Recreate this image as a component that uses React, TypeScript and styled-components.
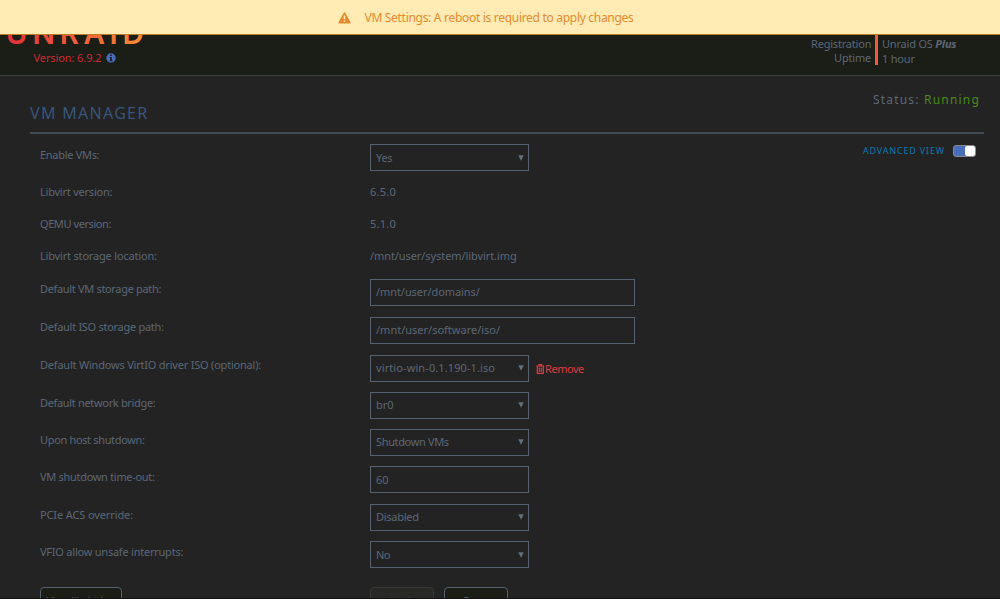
import React from "react";
import styled, { createGlobalStyle } from "styled-components";

const Global = createGlobalStyle`
  * { box-sizing: border-box; }
  html, body { margin: 0; height: 599px; overflow: hidden; background: #232323; }
  body { font: 11px/16px "Noto Sans", sans-serif; color: #5b6776; }
`;

const Page = styled.div`
  height: 599px;
  overflow: hidden;
  display: flex;
  flex-direction: column;
  border-bottom: 1px solid #180f12;
`;

const Banner = styled.div`
  flex: none;
  height: 35px;
  display: flex;
  justify-content: center;
  align-items: center;
  gap: 14px;
  padding: 1px 29px 0 0;
  background: #ffebb3;
  border-bottom: 1px solid #c07a22;
  color: #e68a2e;
`;

const BannerText = styled.span`
  font-size: 12px;
  letter-spacing: -0.3px;
`;

const Header = styled.header`
  flex: none;
  height: 41px;
  display: flex;
  justify-content: space-between;
  background: #1b1d17;
  border-bottom: 1px solid #41443c;
  overflow: hidden;
`;

const Brand = styled.div`
  padding-left: 6px;
`;

const Version = styled.div`
  display: flex;
  align-items: center;
  gap: 5px;
  margin-top: 1px;
  padding-left: 27.5px;
  letter-spacing: -0.1px;
  color: #cb2c34;
`;

const ServerInfo = styled.div`
  display: flex;
  width: 189px;
  height: 30px;
  line-height: 14.5px;
  letter-spacing: -0.2px;
`;

const InfoKeys = styled.div`
  width: 60px;
  padding-top: 1.5px;
  text-align: right;
`;

const InfoValues = styled.div`
  margin-left: 4px;
  padding: 2px 0 0 4px;
  border-left: 3px solid #f15a3a;
  white-space: nowrap;
`;

const Main = styled.main`
  flex: 1;
  min-height: 0;
  padding: 0 16px 0 30px;
`;

const TitleBar = styled.div`
  display: flex;
  justify-content: space-between;
  height: 58px;
  border-bottom: 2px solid #434a54;
`;

const Title = styled.h1`
  margin: 25px 0 0;
  font-size: 16px;
  line-height: 24px;
  font-weight: 400;
  letter-spacing: 1.3px;
  color: #38557a;
`;

const Status = styled.div`
  margin: 15px 4px 0 0;
  font-size: 12px;
  line-height: 18px;
  letter-spacing: 1.2px;
`;

const Running = styled.span`
  color: #4a8a1c;
`;

const Body = styled.div`
  display: flex;
  justify-content: space-between;
`;

const Form = styled.div`
  display: flex;
  flex-direction: column;
  padding: 10px 0 0 10px;
`;

const Row = styled.div<{ $h: number }>`
  display: flex;
  flex: none;
  height: ${(p) => p.$h}px;
`;

const Label = styled.div<{ $ls?: number }>`
  width: 330px;
  padding-top: 2.9px;
  letter-spacing: ${(p) => p.$ls ?? 0}px;
`;

const Value = styled.div<{ $ls?: number }>`
  padding-top: 3px;
  letter-spacing: ${(p) => p.$ls ?? 0}px;
`;

const Field = styled.div<{ $wide?: boolean; $ls?: number }>`
  display: flex;
  align-items: center;
  justify-content: space-between;
  width: ${(p) => (p.$wide ? 265 : 159)}px;
  height: 27px;
  padding: 0 4px 0 5px;
  border: 1px solid #56616f;
  letter-spacing: ${(p) => p.$ls ?? 0}px;
`;

const Remove = styled.div`
  display: flex;
  align-items: center;
  height: 16px;
  margin: 6.8px 0 0 7px;
  letter-spacing: -0.45px;
  color: #dc3c44;
`;

const Advanced = styled.div`
  display: flex;
  align-items: center;
  height: 14px;
  gap: 8px;
  margin: 10px 8px 0 0;
  font-size: 9px;
  letter-spacing: 0.83px;
  color: #0879b2;
`;

const Toggle = styled.div`
  width: 23px;
  height: 12px;
  padding-left: 11px;
  border: 1px solid #8c8c8c;
  border-radius: 3px;
  background: #486dba;
`;

const Knob = styled.div`
  height: 10px;
  border-radius: 2px;
  background: #fff;
`;

const Button = styled.div<{ $w: number; $gap?: number; $off?: boolean }>`
  width: ${(p) => p.$w}px;
  height: 28px;
  margin-right: ${(p) => p.$gap ?? 0}px;
  padding-top: 5px;
  border: 1px solid ${(p) => (p.$off ? "#383838" : "#56616f")};
  border-radius: 4px;
  background: ${(p) => (p.$off ? "#282826" : "#1b1d17")};
  color: ${(p) => (p.$off ? "#3a3d40" : "#586474")};
  text-align: center;
  font-size: 10px;
`;

const Arrow = () => (
  <svg width="6" height="6" viewBox="0 0 6 6">
    <path d="M0.3 0.3H5.7L3 5.8Z" fill="#66717f" />
  </svg>
);

const Logo = () => (
  <svg width="146" height="14" viewBox="6 35 146 14" display="block">
    <defs>
      <linearGradient id="brand" gradientUnits="userSpaceOnUse" x1="8" y1="0" x2="144" y2="0">
        <stop offset="0" stopColor="#e32f3a" />
        <stop offset="1" stopColor="#fb8c36" />
      </linearGradient>
    </defs>
    <text x="5.8 32.6 59.8 83.6 109.6 122.4" y="43.5" fill="url(#brand)" fontFamily="Inter, sans-serif" fontWeight="600" fontSize="29.5">
      UNRAID
    </text>
  </svg>
);

type Item = { label: string; value: string; kind: "select" | "text" | "plain"; h: number; wide?: boolean; ls?: number; vls?: number };

const items: Item[] = [
  { label: "Enable VMs:", value: "Yes", kind: "select", h: 37, ls: -0.3, vls: -0.3 },
  { label: "Libvirt version:", value: "6.5.0", kind: "plain", h: 32, ls: -0.22, vls: 0.25 },
  { label: "QEMU version:", value: "5.1.0", kind: "plain", h: 32, ls: -0.42, vls: 0.25 },
  { label: "Libvirt storage location:", value: "/mnt/user/system/libvirt.img", kind: "plain", h: 33.5, ls: -0.18, vls: -0.08 },
  { label: "Default VM storage path:", value: "/mnt/user/domains/", kind: "text", h: 38, wide: true, ls: -0.33, vls: -0.07 },
  { label: "Default ISO storage path:", value: "/mnt/user/software/iso/", kind: "text", h: 38, wide: true, ls: -0.28 },
  { label: "Default Windows VirtIO driver ISO (optional):", value: "virtio-win-0.1.190-1.iso", kind: "select", h: 37.3, ls: -0.21, vls: 0.1 },
  { label: "Default network bridge:", value: "br0", kind: "select", h: 37.2, ls: -0.33 },
  { label: "Upon host shutdown:", value: "Shutdown VMs", kind: "select", h: 37.2, ls: -0.34, vls: -0.35 },
  { label: "VM shutdown time-out:", value: "60", kind: "text", h: 37.8, ls: -0.3 },
  { label: "PCIe ACS override:", value: "Disabled", kind: "select", h: 37.5, ls: -0.12, vls: -0.28 },
  { label: "VFIO allow unsafe interrupts:", value: "No", kind: "select", h: 45.5, ls: -0.23, vls: -0.5 },
];

export default function App() {
  return (
    <>
      <Global />
      <Page>
        <Banner>
          <svg width="13" height="12" viewBox="0 0 13 12">
            <path d="M6.5 0.3Q7.1 0.3 7.4 0.9L12.5 10.2Q12.9 11.5 11.8 11.5H1.2Q0.1 11.5 0.5 10.2L5.6 0.9Q5.9 0.3 6.5 0.3Z" fill="#e5892d" />
            <path d="M6.5 3.6V7.3M6.5 8.4V10" stroke="#ffebb3" strokeWidth="1.6" />
          </svg>
          <BannerText>VM Settings: A reboot is required to apply changes</BannerText>
        </Banner>
        <Header>
          <Brand>
            <Logo />
            <Version>
              Version: 6.9.2
              <svg width="10" height="10" viewBox="0 0 10 10">
                <circle cx="5" cy="5" r="4.7" fill="#486dba" />
                <path d="M4.2 1.6H5.8V3H4.2ZM3.6 4H5.8V7.2H6.4V8.2H3.6V7.2H4.2V5H3.6Z" fill="#1b1d17" />
              </svg>
            </Version>
          </Brand>
          <ServerInfo>
            <InfoKeys>Registration<br />Uptime</InfoKeys>
            <InfoValues>Unraid OS <b><i>Plus</i></b><br />1 hour</InfoValues>
          </ServerInfo>
        </Header>
        <Main>
          <TitleBar>
            <Title>VM MANAGER</Title>
            <Status>Status: <Running>Running</Running></Status>
          </TitleBar>
          <Body>
            <Form>
              {items.map((it) => (
                <Row key={it.label} $h={it.h}>
                  <Label $ls={it.ls}>{it.label}</Label>
                  {it.kind === "plain" ? (
                    <Value $ls={it.vls}>{it.value}</Value>
                  ) : (
                    <Field $wide={it.wide} $ls={it.vls}>
                      {it.value}
                      {it.kind === "select" && <Arrow />}
                    </Field>
                  )}
                  {it.value.startsWith("virtio") && (
                    <Remove>
                      <svg width="9" height="10" viewBox="0 0 9 10" fill="none" stroke="#dc3c44" strokeWidth="1.2">
                        <path d="M0.3 2H8.3M1.3 2V9.3H7.3V2M3 2V0.7H5.6V2M3.3 3.5V8M5.3 3.5V8" />
                      </svg>
                      Remove
                    </Remove>
                  )}
                </Row>
              ))}
              <Row $h={28}>
                <Button $w={82} $gap={248}>View libvirt log</Button>
                <Button $w={64} $gap={10} $off>Apply</Button>
                <Button $w={64}>Done</Button>
              </Row>
            </Form>
            <Advanced>
              ADVANCED VIEW
              <Toggle><Knob /></Toggle>
            </Advanced>
          </Body>
        </Main>
      </Page>
    </>
  );
}
